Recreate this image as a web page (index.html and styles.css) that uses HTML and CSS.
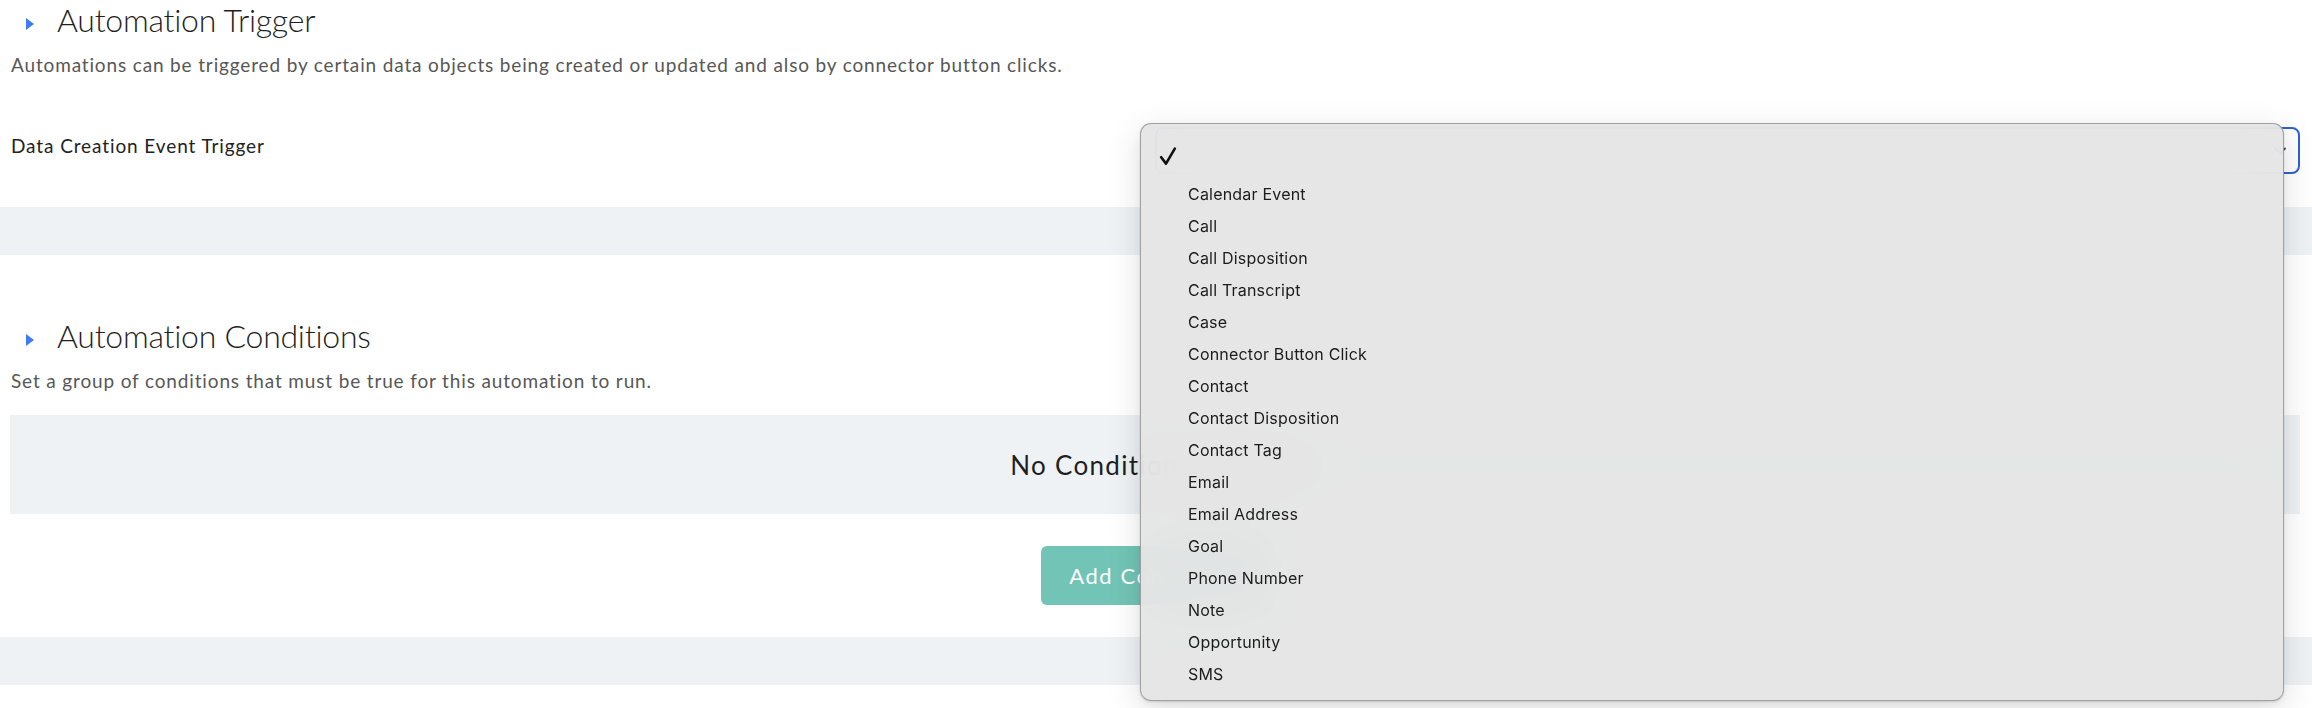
FILE: index.html
```html
<!DOCTYPE html>
<html lang="en">
<head>
<meta charset="utf-8">
<title>Automation</title>
<link rel="stylesheet" href="styles.css">
</head>
<body>
<div class="page">
  <section class="section section-trigger">
    <h2 class="section-title"><span class="caret"></span>Automation Trigger</h2>
    <p class="section-desc">Automations can be triggered by certain data objects being created or updated and also by connector button clicks.</p>
    <div class="field-row">
      <label class="field-label">Data Creation Event Trigger</label>
      <div class="select-wrap">
        <div class="select-box">
          <svg class="chevron" width="12" height="8" viewBox="0 0 12 8"><path d="M1 1.5 L6 6.5 L11 1.5" fill="none" stroke="#3a4a63" stroke-width="1.8" stroke-linecap="round" stroke-linejoin="round"/></svg>
        </div>
        <ul class="select-menu">
          <li class="menu-item is-selected">
            <svg class="check" width="18" height="19" viewBox="0 0 18 19"><path d="M2.2 10.2 L7 16.6 L15.8 1.6" fill="none" stroke="#111" stroke-width="2.6" stroke-linecap="round" stroke-linejoin="round"/></svg>
          </li>
          <li class="menu-item">Calendar Event</li>
          <li class="menu-item">Call</li>
          <li class="menu-item">Call Disposition</li>
          <li class="menu-item">Call Transcript</li>
          <li class="menu-item">Case</li>
          <li class="menu-item">Connector Button Click</li>
          <li class="menu-item">Contact</li>
          <li class="menu-item">Contact Disposition</li>
          <li class="menu-item">Contact Tag</li>
          <li class="menu-item">Email</li>
          <li class="menu-item">Email Address</li>
          <li class="menu-item">Goal</li>
          <li class="menu-item">Phone Number</li>
          <li class="menu-item">Note</li>
          <li class="menu-item">Opportunity</li>
          <li class="menu-item">SMS</li>
        </ul>
      </div>
    </div>
  </section>
  <div class="divider"></div>
  <section class="section section-conditions">
    <h2 class="section-title"><span class="caret"></span>Automation Conditions</h2>
    <p class="section-desc">Set a group of conditions that must be true for this automation to run.</p>
    <div class="empty-box">No Conditions Defined</div>
    <div class="actions"><button class="btn-add" type="button">Add Conditions</button></div>
  </section>
  <div class="divider"></div>
</div>
</body>
</html>
```
FILE: styles.css
```css
* { box-sizing: border-box; }

html, body {
  margin: 0;
  padding: 0;
  background: #fff;
}

body {
  min-height: 708px;
  font-family: "Lato", "Open Sans", sans-serif;
  color: #222;
}

.page {
  display: flex;
  flex-direction: column;
}

.section {
  padding: 0 12px 0 10px;
  display: flex;
  flex-direction: column;
}

.section-trigger {
  padding-bottom: 33px;
}

.section-conditions {
  padding-top: 61px;
  padding-bottom: 32px;
}

.section-title {
  margin: 0;
  display: flex;
  align-items: center;
  font-size: 32px;
  line-height: 40px;
  font-weight: 300;
  color: #1f1f1f;
  letter-spacing: -0.25px;
}

.caret {
  width: 0;
  height: 0;
  margin: 7px 23px 0 16px;
  border-left: 8px solid #3d7bf7;
  border-top: 6.5px solid transparent;
  border-bottom: 6.5px solid transparent;
}

.section-desc {
  margin: 13px 0 0 1px;
  font-size: 19px;
  line-height: 24px;
  color: #575757;
  letter-spacing: 0.85px;
}

.field-row {
  display: grid;
  grid-template-columns: 1fr 1fr;
  margin-top: 50px;
}

.field-label {
  padding: 7px 0 0 1px;
  font-size: 19px;
  line-height: 24px;
  color: #222;
  letter-spacing: 0.9px;
}

.select-wrap {
  position: relative;
}

.select-box {
  height: 47px;
  border: 2px solid #2d62d5;
  border-radius: 8px;
  background: #fff;
  display: flex;
  align-items: center;
  justify-content: flex-end;
  padding-right: 12px;
}

/* native option list, drawn open over the page */
.select-menu {
  position: absolute;
  top: -4px;
  left: -15px;
  right: 16px;
  z-index: 5;
  margin: 0;
  padding: 22px 0 10px;
  list-style: none;
  background: rgba(228, 228, 228, 0.94);
  -webkit-backdrop-filter: blur(28px);
  backdrop-filter: blur(28px);
  border: 1px solid rgba(0, 0, 0, 0.3);
  border-radius: 11px;
  box-shadow: 0 1px 2px rgba(0, 0, 0, 0.12), 0 10px 34px rgba(0, 0, 0, 0.13), 0 2px 8px rgba(0, 0, 0, 0.06);
}

.menu-item {
  position: relative;
  height: 32px;
  line-height: 32px;
  padding-left: 47px;
  font-family: "Inter", "Liberation Sans", sans-serif;
  font-size: 16px;
  color: #1c1c1c;
  letter-spacing: 0.2px;
}

.check {
  position: absolute;
  left: 18px;
  top: 1px;
}

.divider {
  height: 48px;
  background: #eef2f5;
}

.empty-box {
  margin-top: 22px;
  height: 99px;
  background: #eef2f5;
  display: flex;
  align-items: center;
  justify-content: center;
  font-size: 26px;
  color: #1f1f1f;
  letter-spacing: 1.3px;
}

.actions {
  display: flex;
  justify-content: center;
  margin-top: 32px;
}

.btn-add {
  height: 59px;
  padding: 0 28px;
  border: none;
  border-radius: 6px;
  background: #72c5b6;
  color: #fff;
  font-family: "Lato", "Open Sans", sans-serif;
  font-size: 22px;
  letter-spacing: 1.6px;
}
```
